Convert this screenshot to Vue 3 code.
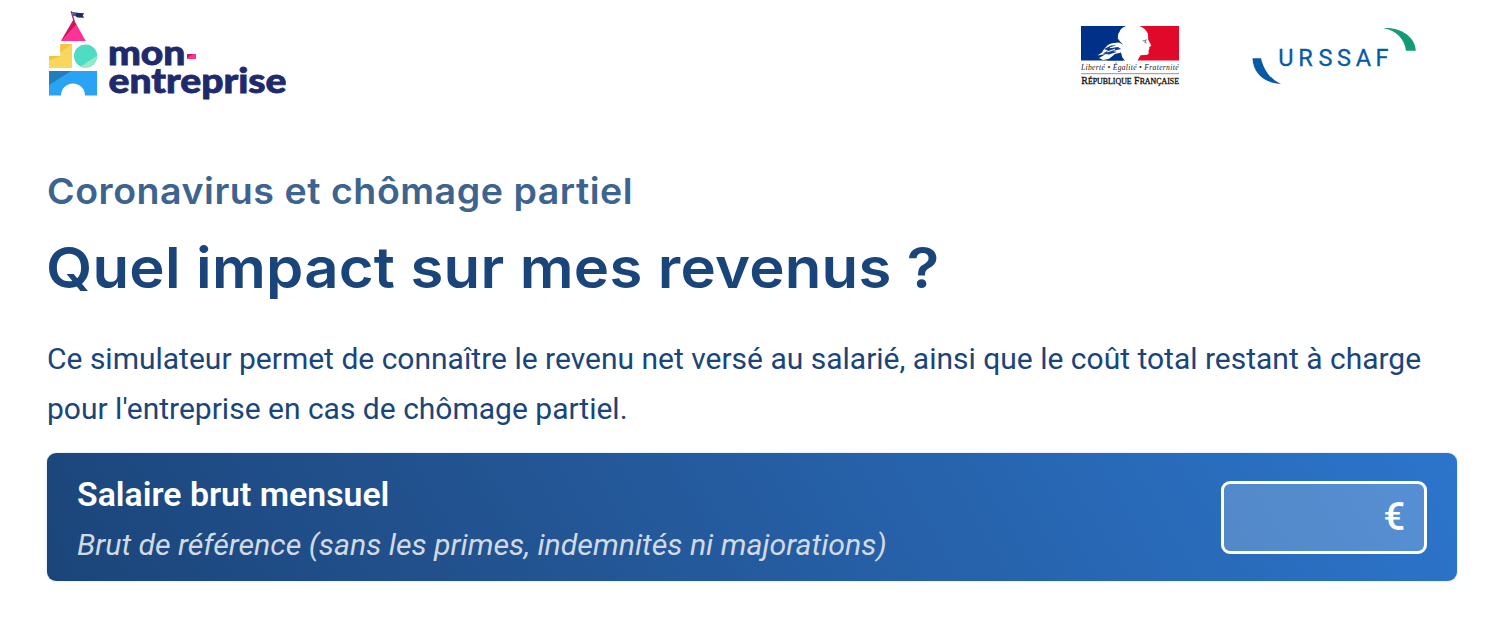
<script setup>
import { ref } from 'vue'

const salary = ref('')
</script>

<template>
  <main class="page">
    <header class="header">
      <svg class="brand" width="240" height="96" viewBox="47 8 240 96" role="img" aria-label="mon-entreprise">
        <path d="M71.2 11.2 74.3 22" stroke="#c2185b" stroke-width="1.3" />
        <path d="M72 11.7 77.5 12.8 79 16.5 73.2 15.9Z" fill="#4c5a94" />
        <path d="M76.5 12.8 84.2 13.2 82.7 15.4 84.2 17.8 77.5 17.4 75.5 16Z" fill="#1f2a6d" />
        <path d="M73.6 19.5 85.8 41H61Z" fill="#ff3395" />
        <path d="M73.6 19.5 76.3 24.5 61 41Z" fill="#c9185e" />
        <path d="M60.3 44H72V68H49V56H60.3Z" fill="#f9d65c" />
        <path d="M60.3 44H72L60.3 52.5V56L49 60.5V56H60.3Z" fill="#f5c242" />
        <circle cx="85.6" cy="56" r="11.6" fill="#50dbc5" />
        <path d="M97 56A11.6 11.6 0 0 1 80.5 66.4Z" fill="#96e9c5" />
        <path d="M49 71H97V95.5H85A12 12 0 0 0 61 95.5H49Z" fill="#2aa3f4" />
        <path d="M49 71H71L49 85Z" fill="#237dbb" />
        <text class="brand-text" x="107.9" y="65" textLength="77.5" lengthAdjust="spacingAndGlyphs">mon</text>
        <text class="brand-text" x="108.5" y="93.2" textLength="178" lengthAdjust="spacingAndGlyphs">entreprise</text>
        <path d="M187 54H196V59H187Z" fill="#ff3395" />
        <path d="M187 54H193L187 58.3Z" fill="#c9185e" />
      </svg>

      <div class="partners">
        <svg width="100" height="64" viewBox="1080 25 100 64" role="img" aria-label="République Française">
          <path d="M1081 26H1126C1122 27.5 1120.5 29 1119.7 31.5 1117.5 34 1118.2 36 1117.8 38.5L1120.5 42 1123 44.5 1121 47 1123.5 50 1121 53 1123 57 1125 60.5H1081Z" fill="#003189" />
          <path d="M1139.5 26H1179V60.5H1137.5L1140.5 55.2 1147.5 54.8 1148.8 53 1148.5 50.5 1149.5 49 1149 47.5 1151.3 45.8 1148.2 39.5 1148 34C1146.5 30.5 1144 27.5 1139.5 26Z" fill="#e1092a" />
          <path d="M1102 52C1105 48 1107.5 44 1112 43.2L1119 42.5 1124 45 1125 60.5 1120 55 1114 58 1103 60 1099 58 1106 54 1097.5 55.5 1104 51Z" fill="#fff" />
          <path d="M1104 49 1111 45.5 1116 45.2 1110 48 1118 47 1121 49 1113 51 1117 52 1109 54.5 1103 53.5 1108 50.5Z" fill="#123f90" />
          <path d="M1107 52 1115 49.2M1110 47.7 1118 45.8M1106 58.5 1112 54.5" fill="none" stroke="#fff" stroke-width="1" />
          <path d="M1107 60.5 1115 54 1121 52.5 1123 60.5Z" fill="#003189" />
          <path d="M1142.5 41 1147 39.8M1144 42 1146.8 43.2M1145.5 40V42.5" stroke="#85878d" stroke-width="1" />
          <text class="motto" x="1081" y="70.2" textLength="97.5">Liberté • Égalité • Fraternité</text>
          <path d="M1081 73.7H1179" stroke="#777" stroke-width=".8" />
          <text class="republic" x="1081.3" y="84" textLength="97.7" lengthAdjust="spacingAndGlyphs">R<tspan class="small-cap">ÉPUBLIQUE</tspan> F<tspan class="small-cap">RANÇAISE</tspan></text>
        </svg>

        <svg class="urssaf" width="166" height="60" viewBox="1251 26 166 60" role="img" aria-label="Urssaf">
          <path d="M1252.5 58.2H1261C1263.5 69 1270 79.5 1281 83.8 1264 83.5 1253 72.5 1252.5 58.2Z" fill="#075aa5" />
          <path d="M1383.5 28.2C1401 27 1415.5 37.5 1415.8 50.8H1406C1404.5 39 1396.5 30.2 1383.5 28.2Z" fill="#159a77" />
          <text class="urssaf-text" x="1278.3 1298.3 1318.5 1337 1355.7 1375.6" y="65.6">URSSAF</text>
        </svg>
      </div>
    </header>

    <p class="eyebrow">Coronavirus et chômage partiel</p>
    <h1 class="title">Quel impact sur mes revenus ?</h1>
    <p class="intro">Ce simulateur permet de connaître le revenu net versé au salarié, ainsi que le coût total restant à charge pour l'entreprise en cas de chômage partiel.</p>

    <section class="card">
      <div class="labels">
        <label class="label" for="salary">Salaire brut mensuel</label>
        <span class="hint">Brut de référence (sans les primes, indemnités ni majorations)</span>
      </div>
      <div class="amount">
        <input id="salary" v-model="salary" class="amount-input" type="text" inputmode="numeric" />
        <span class="currency">€</span>
      </div>
    </section>
  </main>
</template>

<style>
html, body { background: #fff; }
</style>

<style scoped>
.page {
  box-sizing: border-box;
  height: 628px;
  padding: 8px 51px 0 47px;
  overflow: hidden;
  color: #1a457a;
  font-family: Roboto, "Liberation Sans", sans-serif;
}
.header {
  display: flex;
  justify-content: space-between;
  height: 96px;
}
.brand-text {
  fill: #1f2a6d;
  font: 900 34px/1 Lato, sans-serif;
  stroke: #1f2a6d;
  stroke-width: .8px;
}
.partners {
  display: flex;
  gap: 71px;
  padding: 17px 40px 0 0;
}
.urssaf { margin-top: 1px; }
.motto { fill: #222; font: italic 7.6px "Liberation Serif", serif; }
.republic { fill: #111; stroke: #111; stroke-width: .3px; font: 9.8px "Liberation Serif", serif; }
.small-cap { font-size: 7.8px; }
.urssaf-text { fill: #075aa5; stroke: #075aa5; stroke-width: .3px; font: 23.5px Roboto, sans-serif; }
.eyebrow, .title {
  margin: 0;
  font-family: Inter, sans-serif;
  font-weight: 600;
  white-space: nowrap;
  transform-origin: 0 50%;
}
.eyebrow {
  margin-top: 65px;
  color: #3d648f;
  font-size: 36px;
  line-height: 44px;
  letter-spacing: .5px;
  transform: scaleX(1.043);
}
.title {
  margin-top: 20px;
  font-size: 57px;
  line-height: 70px;
  letter-spacing: .2px;
  transform: translateX(-1px) scaleX(1.05);
}
.intro {
  margin: 31px 0 0;
  font-size: 30px;
  line-height: 50px;
}
.card {
  display: flex;
  justify-content: space-between;
  align-items: center;
  box-sizing: border-box;
  height: 128px;
  margin-top: 19px;
  padding: 0 30px;
  border-radius: 9px;
  background: linear-gradient(60deg, #1b457a 0%, #22528f 30%, #2c75cc 100%);
  box-shadow: 0 0 2px rgba(44, 117, 204, .35);
  color: #fff;
}
.labels {
  display: flex;
  flex-direction: column;
  padding-top: 6px;
}
.label {
  font-size: 33.8px;
  font-weight: 600;
  line-height: 50px;
}
.hint {
  color: #d1dae4;
  font-size: 30.3px;
  font-style: italic;
  line-height: 50px;
}
.amount {
  display: flex;
  align-items: center;
  box-sizing: border-box;
  width: 206px;
  height: 73px;
  padding: 0 19px 0 12px;
  border: 3px solid #fff;
  border-radius: 9px;
  background: rgba(255, 255, 255, .2);
}
.amount-input {
  flex: 1;
  min-width: 0;
  padding: 0;
  border: 0;
  outline: 0;
  background: transparent;
  color: inherit;
  font: 500 38px Roboto, sans-serif;
  text-align: right;
}
.currency {
  font-size: 38px;
  font-weight: 500;
  line-height: 50px;
}
</style>
